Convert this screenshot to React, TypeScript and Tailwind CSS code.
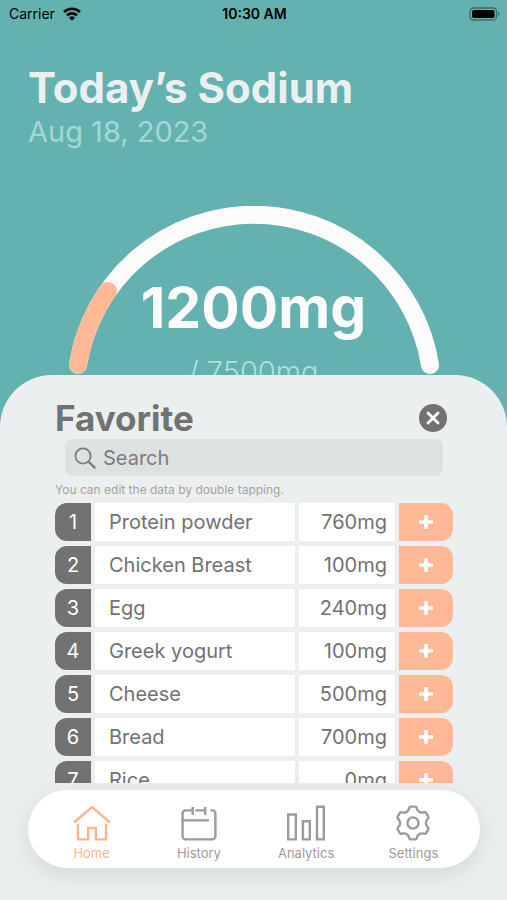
import type { ReactNode } from 'react';

interface Favorite {
  name: string;
  sodium: number;
}

const favorites: Favorite[] = [
  { name: 'Protein powder', sodium: 760 },
  { name: 'Chicken Breast', sodium: 100 },
  { name: 'Egg', sodium: 240 },
  { name: 'Greek yogurt', sodium: 100 },
  { name: 'Cheese', sodium: 500 },
  { name: 'Bread', sodium: 700 },
  { name: 'Rice', sodium: 0 },
];

const CONSUMED = 1200;
const LIMIT = 7500;

function StatusBar() {
  return (
    <div className="grid h-7 grid-cols-3 items-center pr-[7px] pl-[9px] text-black">
      <div className="flex items-center gap-2">
        <span className="text-sm">Carrier</span>
        <svg viewBox="0 0 18 14" className="h-[14px] w-[18px]" fill="none" stroke="currentColor" strokeWidth="2.6">
          <path d="M1 5a11.5 11.5 0 0 1 16 0" />
          <path d="M4 8.4a7.2 7.2 0 0 1 10 0" />
          <path d="M9 13.8 6 10.8a4.3 4.3 0 0 1 6 0Z" fill="currentColor" stroke="none" />
        </svg>
      </div>
      <span className="text-center text-sm font-semibold">10:30 AM</span>
      <svg viewBox="0 0 31 15" className="h-[15px] w-[31px] justify-self-end">
        <rect x="1" y="1" width="26.5" height="12" rx="3.6" fill="none" stroke="#000" strokeOpacity="0.4" strokeWidth="1.3" />
        <rect x="3" y="3" width="22.5" height="8" rx="1.8" />
        <path d="M29 4.8c1.7.6 1.7 3.800 0 4.400Z" fillOpacity="0.45" />
      </svg>
    </div>
  );
}

function Gauge() {
  const arc = 'M10 159A178.2 178.2 0 0 1 362 159';

  return (
    <div className="relative mx-auto mt-[55px] w-[372px]">
      <svg viewBox="0 0 372 169" className="w-full" fill="none" strokeWidth="18" strokeLinecap="round">
        <path d={arc} stroke="#fbfbfb" />
        <path d={arc} stroke="#ffb996" pathLength={LIMIT} strokeDasharray={`${CONSUMED} ${LIMIT * 2}`} />
      </svg>
      <div className="absolute inset-x-0 top-[66px] flex flex-col items-center">
        <p className="text-[57px] leading-[72px] font-bold text-[#fbfbfb]">{CONSUMED}mg</p>
        <p className="mt-2 text-[29px] leading-10 font-light text-[#b0dfdf]">/ {LIMIT}mg</p>
      </div>
    </div>
  );
}

function FavoriteRow({ index, item }: { index: number; item: Favorite }) {
  return (
    <tr className="h-[38px] text-xl text-[#727272]">
      <td className="w-9 rounded-l-xl bg-[#727272] p-0 text-center text-white">{index}</td>
      <td className="bg-white py-0 pr-2 pl-[14px]">{item.name}</td>
      <td className="w-24 bg-white py-0 pr-2 pl-0 text-right">{item.sodium}mg</td>
      <td className="w-[54px] p-0">
        <button
          aria-label={`Add ${item.name}`}
          className="flex h-[38px] w-full items-center justify-center rounded-r-xl bg-[#ffb996] text-white"
        >
          <svg viewBox="0 0 14 14" className="size-[14px]" stroke="currentColor" strokeWidth="3.6">
            <path d="M7 0v14M0 7h14" />
          </svg>
        </button>
      </td>
    </tr>
  );
}

function FavoriteSheet() {
  return (
    <section className="flex min-h-0 flex-1 flex-col pr-[50px] pl-[51px]">
      <div className="flex h-16 items-center justify-between pt-[22px] pr-2.5 pl-1">
        <h2 className="text-[35px] leading-[42px] font-bold text-[#727272]">Favorite</h2>
        <button aria-label="Close">
          <svg viewBox="0 0 28 28" className="size-7">
            <circle cx="14" cy="14" r="14" fill="#727272" />
            <path d="m9 9 10 10M19 9 9 19" stroke="#fff" strokeWidth="2.8" strokeLinecap="round" />
          </svg>
        </button>
      </div>
      <label className="mx-[14px] flex h-[37px] shrink-0 items-center gap-[7px] rounded-lg bg-[#dde1e2] px-[9px] text-[#7a7c80]">
        <svg viewBox="0 0 22 22" className="size-[22px]" fill="none" stroke="currentColor" strokeWidth="1.8" strokeLinecap="round">
          <circle cx="9" cy="9" r="7.6" />
          <path d="m14.6 14.6 6 6" strokeWidth="2.2" />
        </svg>
        <input
          type="search"
          placeholder="Search"
          className="min-w-0 flex-1 bg-transparent text-xl outline-none placeholder:text-[#7a7c80]"
        />
      </label>
      <p className="mt-[6px] pl-1 text-xs leading-4 text-[#a8a29e]">You can edit the data by double tapping.</p>
      <div className="min-h-0 flex-1 overflow-y-auto [scrollbar-width:none]">
        <table className="w-full border-separate border-spacing-x-1 border-spacing-y-[5px]">
          <tbody>
            {favorites.map((item, i) => (
              <FavoriteRow key={item.name} index={i + 1} item={item} />
            ))}
          </tbody>
        </table>
      </div>
    </section>
  );
}

function TabItem({ label, active, children }: { label: string; active?: boolean; children: ReactNode }) {
  return (
    <a
      href="#"
      className={`flex flex-1 flex-col items-center gap-[3px] ${active ? 'text-[#ffb38e]' : 'text-[#a09a97]'}`}
    >
      <svg viewBox="0 0 38 38" className="size-[38px]" fill="none" stroke="currentColor" strokeWidth="2.4">
        {children}
      </svg>
      <span className="text-[13px] leading-4">{label}</span>
    </a>
  );
}

function TabBar() {
  return (
    <nav className="mr-[27px] mb-8 ml-7 mt-[7px] flex h-[78px] shrink-0 items-center rounded-full bg-white pt-[6px] pr-[13px] pl-[10px] shadow-[0_6px_24px_rgba(0,0,0,0.1)]">
      <TabItem label="Home" active>
        <path d="M1 18.5 19 3l18 15.5" />
        <path d="M5 20v15.4h10.2V24h7.6v11.4H33V20" />
      </TabItem>
      <TabItem label="History">
        <path d="M12.7 6.4H5.6a3 3 0 0 0-3 3v23a3 3 0 0 0 3 3h26.800a3 3 0 0 0 3-3v-23a3 3 0 0 0-3-3h-2M15.300 6.400h10M2.600 16.400H29" />
        <path d="M12.700 3v8M25.300 3v8" />
      </TabItem>
      <TabItem label="Analytics">
        <path d="M1.200 10.500h7.600v24.900H1.200ZM15.900 17.200h6.900v18.200h-6.900ZM30 2.800h6.800v32.600H30Z" />
      </TabItem>
      <TabItem label="Settings">
        {[0, 60, 120, 180, 240, 300].map((angle) => (
          <path
            key={angle}
            strokeLinecap="round"
            transform={`rotate(${angle} 19 19)`}
            d="M15.1 4.4Q15.4 2.6 16.8 2.6H21.2Q22.6 2.6 22.9 4.4C23.5 7.5 26.71 9.35 29.69 8.32"
          />
        ))}
        <circle cx="19" cy="19" r="5.6" />
      </TabItem>
    </nav>
  );
}

export default function App() {
  return (
    <div className="flex h-screen flex-col overflow-hidden bg-[#63b2af] font-['Inter',sans-serif]">
      <StatusBar />
      <header className="px-7 pt-9">
        <h1 className="text-[42px] leading-[48px] font-bold text-[#ebeff0]">Today’s Sodium</h1>
        <p className="text-[29px] leading-[39px] text-[#a4d8d7]">Aug 18, 2023</p>
      </header>
      <Gauge />
      <main className="relative flex min-h-0 flex-1 flex-col rounded-t-[52px] bg-[#ebeff0]">
        <FavoriteSheet />
        <TabBar />
      </main>
    </div>
  );
}
